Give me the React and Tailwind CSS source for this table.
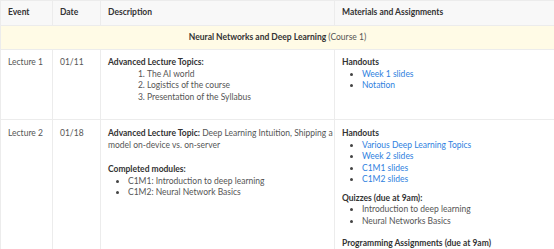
const cell = 'border border-[#ececec] px-[7px] align-top';

function Bullets({ items, link, gap = 'mb-[7px]' }) {
  return (
    <ul className={'list-disc pl-[20px] marker:text-[#444] ' + gap}>
      {items.map((it) => (
        <li key={it}>
          <span className={link ? 'text-[#2f7fe0]' : 'text-[#555]'}>{it}</span>
        </li>
      ))}
    </ul>
  );
}

export default function App() {
  return (
    <div className="w-[554px] h-[249px] overflow-hidden bg-white text-[8.5px] leading-[11.5px] text-[#555] font-['Lato','Noto_Sans',sans-serif]">
      <table className="w-[554px] table-fixed border-collapse">
        <colgroup>
          <col className="w-[52px]" />
          <col className="w-[48px]" />
          <col className="w-[234px]" />
          <col className="w-[220px]" />
        </colgroup>
        <thead>
          <tr className="bg-[#f8f8f8] text-left text-[#333]">
            <th className={cell + ' py-[6px] font-bold'}>Event</th>
            <th className={cell + ' py-[6px] font-bold'}>Date</th>
            <th className={cell + ' py-[6px] font-bold'}>Description</th>
            <th className={cell + ' py-[6px] font-bold'}>Materials and Assignments</th>
          </tr>
        </thead>
        <tbody>
          <tr className="bg-[#fffbe6]">
            <td colSpan={4} className="border border-[#ececec] px-[7px] py-[6px] text-center">
              <span className="font-bold text-[#333]">Neural Networks and Deep Learning</span> (Course 1)
            </td>
          </tr>
          <tr>
            <td className={cell + ' py-[7px]'}>Lecture 1</td>
            <td className={cell + ' py-[7px]'}>01/11</td>
            <td className={cell + ' py-[7px]'}>
              <div className="font-bold text-[#333]">Advanced Lecture Topics:</div>
              <ol className="list-decimal pl-[39px] mb-[9px]">
                <li>The AI world</li>
                <li>Logistics of the course</li>
                <li>Presentation of the Syllabus</li>
              </ol>
            </td>
            <td className={cell + ' py-[7px]'}>
              <div className="font-bold text-[#333]">Handouts</div>
              <Bullets link items={['Week 1 slides', 'Notation']} />
            </td>
          </tr>
          <tr>
            <td className={cell + ' pt-[8px]'}>Lecture 2</td>
            <td className={cell + ' pt-[8px]'}>01/18</td>
            <td className={cell + ' pt-[8px]'}>
              <p className="mb-[13px]">
                <span className="whitespace-nowrap">
                  <span className="font-bold text-[#333]">Advanced Lecture Topic:</span> Deep Learning Intuition, Shipping a
                </span>
                <br />
                model on-device vs. on-server
              </p>
              <div className="font-bold text-[#333]">Completed modules:</div>
              <Bullets items={['C1M1: Introduction to deep learning', 'C1M2: Neural Network Basics']} />
            </td>
            <td className={cell + ' pt-[8px]'}>
              <div className="font-bold text-[#333]">Handouts</div>
              <Bullets link items={['Various Deep Learning Topics', 'Week 2 slides', 'C1M1 slides', 'C1M2 slides']} />
              <div className="font-bold text-[#333]">Quizzes (due at 9am):</div>
              <Bullets gap="mb-[11px]" items={['Introduction to deep learning', 'Neural Networks Basics']} />
              <div className="font-bold text-[#333]">Programming Assignments (due at 9am)</div>
            </td>
          </tr>
        </tbody>
      </table>
    </div>
  );
}
